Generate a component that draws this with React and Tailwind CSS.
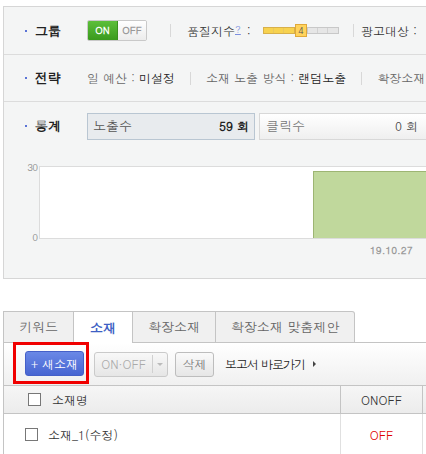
const font = "font-['Dotum','Liberation_Sans','Noto_Sans_CJK_KR',sans-serif]";

function RowLabel({ children }) {
  return (
    <div className="flex items-center w-[83px] pl-[21px] shrink-0">
      <span className="w-[2px] h-[2px] bg-[#5b73d6] mr-[8px]" />
      <span className="text-[13px] font-bold text-[#222]">{children}</span>
    </div>
  );
}

function Sep({ className = "mx-[14px]" }) {
  return <span className={`w-px h-[13px] bg-[#d8d8d8] ${className}`} />;
}

function QualityBar() {
  return (
    <div className="flex items-center ml-[12px]">
      <div className="flex h-[7px] border border-[#d8b04a] bg-[#f7d24f]">
        <span className="w-[10px] border-r border-[#e8c75e]" />
        <span className="w-[10px] border-r border-[#e8c75e]" />
        <span className="w-[10px]" />
      </div>
      <div className="w-[12px] h-[13px] border border-[#e0a93a] bg-[#ffd35c] text-[10px] leading-[11px] text-center text-[#555]">
        4
      </div>
      <div className="flex h-[7px] border border-[#c8c8c8] bg-[#e6e6e6]">
        <span className="w-[10px] border-r border-[#d2d2d2]" />
        <span className="w-[10px] border-r border-[#d2d2d2]" />
        <span className="w-[10px]" />
      </div>
    </div>
  );
}

function Checkbox() {
  return <span className="w-[13px] h-[13px] border border-[#777] bg-white shrink-0" />;
}

export default function App() {
  return (
    <div className={`w-[426px] h-[454px] overflow-hidden bg-white ${font} text-[12px] text-[#333]`}>
      <div className="w-[700px] pl-[3px] pt-[6px]">
        {/* summary panel */}
        <div className="border border-[#d6d6d6] bg-[#f4f5f5] h-[273px]">
          <div className="flex items-center h-[48px] border-b border-[#dcdcdc]">
            <RowLabel>그룹</RowLabel>
            <div className="flex h-[21px] rounded-[2px] overflow-hidden border border-[#c9c9c9] text-[10px] font-bold">
              <span className="w-[30px] flex items-center justify-center bg-gradient-to-b from-[#5cbf3a] to-[#3a9a1c] text-white border-r border-[#3a8f1f]">
                ON
              </span>
              <span className="w-[28px] flex items-center justify-center bg-gradient-to-b from-white to-[#ececec] text-[#999]">
                OFF
              </span>
            </div>
            <Sep className="ml-[23px] mr-[16px]" />
            <span>
              품질지수<span className="text-[#7c8fe0] text-[10px] align-top underline">?</span>
              <span className="ml-[2px]"> :</span>
            </span>
            <QualityBar />
            <Sep className="ml-[14px] mr-[7px]" />
            <span>광고대상 :</span>
          </div>

          <div className="flex items-center h-[47px] border-b border-[#dcdcdc]">
            <RowLabel>전략</RowLabel>
            <span className="text-[#666]">
              일 예산 : <span className="text-[#222]">미설정</span>
            </span>
            <Sep className="mx-[15px]" />
            <span className="text-[#666]">
              소재 노출 방식 : <span className="text-[#222]">랜덤노출</span>
            </span>
            <Sep className="mx-[15px]" />
            <span className="text-[#666]">확장소재</span>
          </div>

          <div className="flex items-center h-[48px]">
            <RowLabel>통계</RowLabel>
            <div className="flex items-center justify-between w-[168px] h-[27px] px-[5px] border border-[#b9c6d2] bg-[#e8ebee]">
              <span className="text-[13px] text-[#555]">노출수</span>
              <span className="text-[12px] font-bold text-[#222]">59 회</span>
            </div>
            <div className="flex items-center justify-between w-[200px] h-[27px] ml-[4px] pl-[6px] pr-[40px] border border-[#d8d8d8] bg-gradient-to-b from-white to-[#efefef]">
              <span className="text-[13px] text-[#777]">클릭수</span>
              <span className="text-[12px] text-[#444]">0 회</span>
            </div>
          </div>

          {/* chart */}
          <div className="flex mt-[16px]">
            <div className="w-[35px] h-[73px] flex flex-col justify-between items-end pr-[2px] text-[10px] text-[#888] tracking-[-1px]">
              <span className="-mt-[6px]">30</span>
              <span className="-mb-[6px]">0</span>
            </div>
            <div className="relative w-[500px] h-[73px] bg-white border-y border-l border-[#dcdcdc]">
              <div className="absolute left-[273px] top-[4px] bottom-0 w-[200px] bg-[#c0d89c] border-t border-l border-[#9db573]" />
            </div>
          </div>
          <div className="pl-[366px] mt-[4px] text-[10px] font-bold text-[#999]">19.10.27</div>
        </div>

        {/* tabs */}
        <div className="flex mt-[32px] h-[32px] text-[13px]">
          <div className="w-[71px] flex items-center justify-center border border-[#c4c4c4] bg-[#f0f0f0] text-[#666]">키워드</div>
          <div className="w-[59px] flex items-center justify-center border-t border-r border-[#c4c4c4] bg-white text-[#3e5fc4] font-bold">소재</div>
          <div className="w-[83px] flex items-center justify-center border-t border-b border-r border-[#c4c4c4] bg-[#f0f0f0] text-[#666]">확장소재</div>
          <div className="w-[139px] flex items-center justify-center border-t border-b border-r border-[#c4c4c4] rounded-tr-[3px] bg-[#f0f0f0] text-[#666]">확장소재 맞춤제안</div>
          <div className="flex-1 border-b border-[#c4c4c4]" />
        </div>

        {/* toolbar */}
        <div className="flex items-center h-[42px] border-l border-[#c4c4c4] bg-gradient-to-b from-white to-[#f0f0f0]">
          <div className="ml-[9px] p-[7px_2px_5px_9px] border-[3px] border-[#f00000] h-[42px] w-[76px] flex items-center -mt-[3px]">
            <div className="flex items-center justify-center w-[61px] h-[25px] rounded-[3px] border border-[#4560c8] bg-gradient-to-b from-[#6a88e6] to-[#4866d2] text-white text-[12px]">
              + 새소재
            </div>
          </div>
          <div className="flex items-center ml-[5px] h-[25px] w-[74px] rounded-[3px] border border-[#cacaca] bg-gradient-to-b from-[#f8f8f8] to-[#e6e6e6] text-[#aaa]">
            <span className="w-[58px] text-center border-r border-[#d0d0d0]">ON·OFF</span>
            <span className="flex-1 flex justify-center">
              <span className="w-0 h-0 border-x-[3px] border-x-transparent border-t-[3px] border-t-[#bbb]" />
            </span>
          </div>
          <div className="flex items-center justify-center ml-[7px] h-[25px] w-[39px] rounded-[3px] border border-[#bdbdbd] bg-gradient-to-b from-[#fafafa] to-[#e6e6e6] text-[#777]">
            삭제
          </div>
          <span className="ml-[11px] text-[#222] tracking-[-1px]">보고서 바로가기</span>
          <span className="ml-[8px] w-0 h-0 border-y-[3px] border-y-transparent border-l-[3px] border-l-[#444]" />
        </div>

        {/* table */}
        <div className="flex h-[29px] border-y border-l border-[#c4c4c4] bg-gradient-to-b from-[#f6f6f6] to-[#ececec]">
          <div className="w-[337px] flex items-center pl-[24px] border-r border-[#c4c4c4]">
            <Checkbox />
            <span className="ml-[11px] text-[#333]">소재명</span>
          </div>
          <div className="w-[82px] flex items-center justify-center border-r border-[#c4c4c4] text-[#333]">ONOFF</div>
        </div>
        <div className="flex h-[41px] border-l border-[#c4c4c4]">
          <div className="w-[337px] flex items-center pl-[21px] border-r border-[#e0e0e0]">
            <Checkbox />
            <span className="ml-[10px] text-[#333]">소재_1(수정)</span>
          </div>
          <div className="w-[82px] flex items-center justify-center border-r border-[#e0e0e0] text-[#e00000]">OFF</div>
        </div>
      </div>
    </div>
  );
}
